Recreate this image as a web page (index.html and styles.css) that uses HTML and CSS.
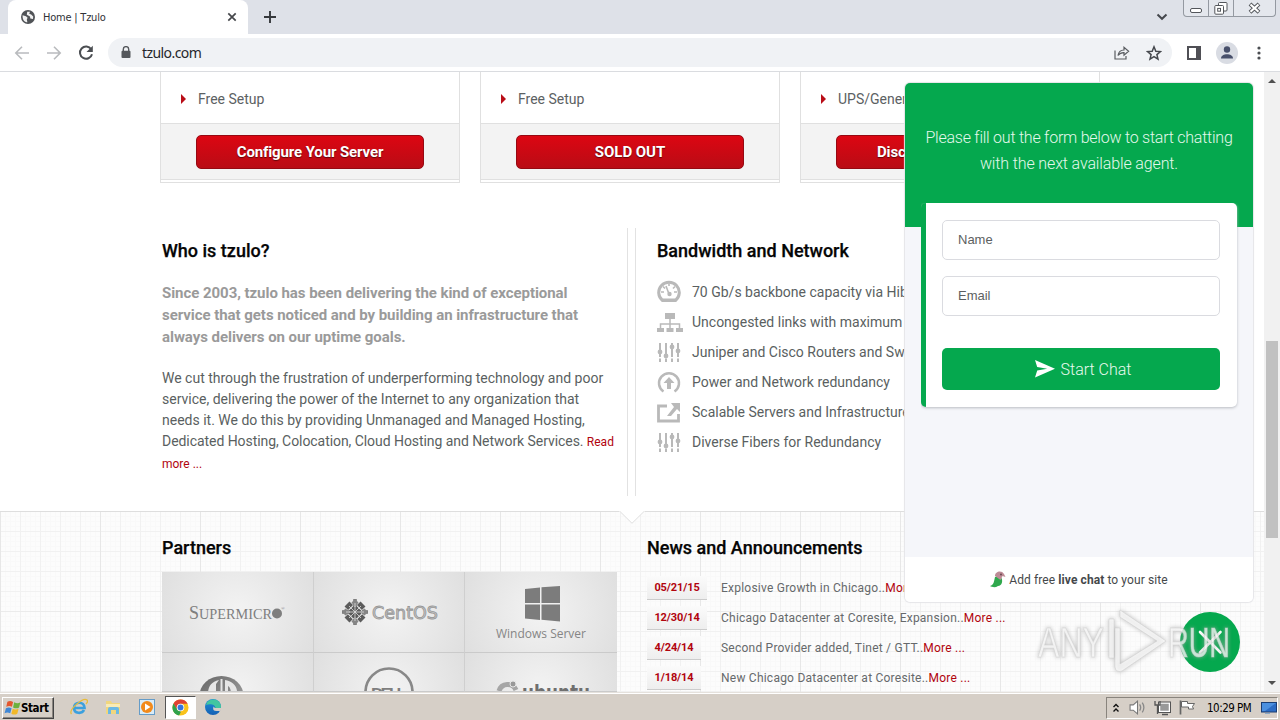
FILE: index.html
```html
<!DOCTYPE html>
<html lang="en">
<head>
<meta charset="utf-8">
<title>Home | Tzulo</title>
<link rel="stylesheet" href="styles.css">
</head>
<body>
<svg width="0" height="0" class="defs">
  <defs>
    <linearGradient id="metal" x1="0" y1="0" x2="1" y2="1"><stop offset="0" stop-color="#666"/><stop offset="1" stop-color="#aaa"/></linearGradient>
    <linearGradient id="edge" x1="0" y1="0" x2="0" y2="1"><stop offset="0" stop-color="#1f8fd8"/><stop offset="1" stop-color="#1460b4"/></linearGradient>
    <symbol id="sliders" viewBox="0 0 26 24"><g stroke="#b9b9b9" stroke-width="2" fill="#b9b9b9"><path d="M3 3v19M9 3v19M15 3v19M21 3v19" stroke-dasharray="14 1.5"/><circle cx="3" cy="12" r="1.4"/><circle cx="9" cy="16" r="1.4"/><circle cx="15" cy="7" r="1.4"/><circle cx="21" cy="11" r="1.4"/></g></symbol>
  </defs>
</svg>

<header class="tabstrip">
  <div class="tabedge"></div>
  <div class="tab">
    <svg class="globe" width="14" height="14" viewBox="0 0 14 14"><circle cx="7" cy="7" r="7" fill="#505357"/><path d="M1.6 5.2 5 6.200l1.600 1.600-.8 1.700.6 2.800C3.500 12.300 1.300 9.500 1.600 5.200zM6.200 1.700 9 1.800l-.8 2 2 .6 2 2.100-.2 2.400-2.700-.3-.3-2.200-3.200-1.600z" fill="#fff" opacity=".92"/></svg>
    <span class="tab-title">Home | Tzulo</span>
    <svg width="10" height="10" viewBox="0 0 10 10"><path d="m1.300 1.300 7.400 7.400m0-7.400-7.400 7.400" stroke="#45474b" stroke-width="1.700"/></svg>
  </div>
  <svg class="plus" width="12" height="12" viewBox="0 0 12 12"><path d="M6 0v12M0 6h12" stroke="#35383c" stroke-width="1.900"/></svg>
  <svg class="chev" width="12" height="8" viewBox="0 0 12 8"><path d="m1.500 1.500 4.500 4.300 4.500-4.300" fill="none" stroke="#45484d" stroke-width="2"/></svg>
  <div class="winctl">
    <span class="w1"><svg width="13" height="6"><rect x=".5" y=".5" width="11" height="4" rx="1.500" fill="#fff" stroke="#53565b"/></svg></span>
    <span class="w2"><svg width="14" height="13" viewBox="0 0 14 13"><g fill="#fff" stroke="#53565b"><rect x="4.500" y=".5" width="8.500" height="8.500" rx="1"/><rect x=".8" y="3.500" width="8.700" height="8.700" rx="1"/><rect x="3.700" y="6.400" width="2.800" height="2.800"/></g></svg></span>
    <span class="w3"><svg width="13" height="12" viewBox="0 0 13 12"><path d="m2 2 9 8.300M11 2l-9 8.300" stroke="#53565b" stroke-width="4"/><path d="m2.500 2.500 8 7.300M10.500 2.500l-8 7.300" stroke="#fff" stroke-width="2.200"/></svg></span>
  </div>
</header>

<div class="toolbar">
  <svg width="16" height="16" viewBox="0 0 16 16"><path d="M15 8H2M8 1.800 1.800 8 8 14.200" fill="none" stroke="#b9bbbe" stroke-width="1.600"/></svg>
  <svg width="16" height="16" viewBox="0 0 16 16"><path d="M1 8h13M8 1.800 14.200 8 8 14.200" fill="none" stroke="#b9bbbe" stroke-width="1.600"/></svg>
  <svg width="16" height="16" viewBox="0 0 16 16"><path d="M13.200 4.300A6.100 6.100 0 1 0 14 9.200" fill="none" stroke="#4b4e52" stroke-width="2"/><path d="M14.800.8v6.300H8.500z" fill="#4b4e52"/></svg>
  <div class="omnibox">
    <svg width="10" height="13" viewBox="0 0 10 13"><path d="M2.300 6V3.300a2.700 2.700 0 0 1 5.400 0V6" fill="none" stroke="#55585c" stroke-width="1.400"/><rect x=".5" y="4.800" width="9" height="7.200" rx="1" fill="#55585c"/></svg>
    <span class="url">tzulo.com</span>
    <svg class="share" width="16" height="14" viewBox="0 0 16 14"><path d="M1 4.500V13h11v-3" fill="none" stroke="#5a5d61" stroke-width="1.200"/><path d="M4 9.500c.6-3.700 2.700-5.400 6-5.500V1.300l4.600 4-4.600 4V6.600C7.300 6.500 5.600 7.300 4 9.500z" fill="none" stroke="#5a5d61" stroke-width="1.200"/></svg>
    <svg width="16" height="16" viewBox="0 0 16 16"><path d="m8 1.800 1.800 4.400 4.700.4-3.600 3 1.100 4.600L8 11.700l-4 2.500 1.100-4.600-3.600-3 4.700-.4z" fill="none" stroke="#45484d" stroke-width="1.500"/></svg>
  </div>
  <svg class="panel" width="14" height="14" viewBox="0 0 14 14"><rect x="1" y="1" width="12" height="12" fill="#fff" stroke="#4f4f55" stroke-width="2"/><path d="M9 1h4v12H9z" fill="#4f4f55"/></svg>
  <svg class="avatar" width="22" height="22" viewBox="0 0 22 22"><circle cx="11" cy="11" r="11" fill="#d9dce3"/><circle cx="11" cy="7.500" r="3.200" fill="#48506b"/><path d="M5 16.500c0-5.600 12-5.600 12 0z" fill="#48506b"/></svg>
  <svg class="dots" width="4" height="14"><g fill="#4b4e52"><circle cx="2" cy="2" r="1.600"/><circle cx="2" cy="7" r="1.600"/><circle cx="2" cy="12" r="1.600"/></g></svg>
</div>

<div class="view">
  <main class="page">
    <section class="plans">
      <article class="plan"><div class="feature"><i></i><span>Free Setup</span></div><div class="buy"><a class="btn">Configure Your Server</a></div></article>
      <article class="plan"><div class="feature"><i></i><span>Free Setup</span></div><div class="buy"><a class="btn wide">SOLD OUT</a></div></article>
      <article class="plan"><div class="feature"><i></i><span>UPS/Generator</span></div><div class="buy"><a class="btn">Discover Our Services</a></div></article>
    </section>

    <section class="about">
      <div class="who">
        <h2>Who is tzulo?</h2>
        <p class="lead">Since 2003, tzulo has been delivering the kind of exceptional<br>service that gets noticed and by building an infrastructure that<br>always delivers on our uptime goals.</p>
        <p class="copy">We cut through the frustration of underperforming technology and poor<br>service, delivering the power of the Internet to any organization that<br>needs it. We do this by providing Unmanaged and Managed Hosting,<br><span>Dedicated Hosting, Colocation, Cloud Hosting and Network Services. </span><a>Read<br>more ...</a></p>
      </div>
      <div class="divider"></div>
      <div class="network">
        <h2>Bandwidth and Network</h2>
        <ul>
          <li><svg width="26" height="24" viewBox="0 0 26 24"><path d="M5.500 20.500a10.300 10.300 0 1 1 13 0z" fill="#fff" stroke="#b9b9b9" stroke-width="3"/><path d="m12 14-3-8M12 3.500V6M4 12h3M17 12h3M6 6.500l2 2M18 6.500l-2 2" stroke="#b9b9b9" stroke-width="1.600"/><circle cx="12.500" cy="14" r="2.200" fill="#b9b9b9"/><path d="M6 18.500h12V22H6z" fill="#b9b9b9"/></svg><span>70 Gb/s backbone capacity via Hibernia</span></li>
          <li><svg width="26" height="24" viewBox="0 0 26 24"><path d="M8 3h10v6H8zM0 18h7v4H0zM9.500 18h7v4h-7zM19 18h7v4h-7z" fill="#b9b9b9"/><path d="M13 8v10M3.500 18v-4h19v4" fill="none" stroke="#b9b9b9" stroke-width="1.500"/></svg><span>Uncongested links with maximum uptime</span></li>
          <li><svg width="26" height="24"><use href="#sliders"/></svg><span>Juniper and Cisco Routers and Switches</span></li>
          <li><svg width="26" height="24" viewBox="0 0 26 24"><path d="M6.500 21.500a10 10 0 1 1 11 0" fill="none" stroke="#b9b9b9" stroke-width="2.500"/><path d="m12 7 5.500 6H14v6h-4v-6H6.500z" fill="#b9b9b9"/></svg><span>Power and Network redundancy</span></li>
          <li><svg width="26" height="24" viewBox="0 0 26 24"><path d="M10 6H1.500v15h20v-7" fill="none" stroke="#b9b9b9" stroke-width="2.800"/><path d="M14 3h9v9l-3-3-6 7H10l7-9z" fill="#b9b9b9"/></svg><span>Scalable Servers and Infrastructure</span></li>
          <li><svg width="26" height="24"><use href="#sliders"/></svg><span>Diverse Fibers for Redundancy</span></li>
        </ul>
      </div>
    </section>

    <section class="lower">
      <svg class="notch" width="26" height="14" viewBox="0 0 26 14"><path d="M0 0h26L13 12.500z" fill="#fff"/><path d="m1 .5 12 11.800L25 .5" fill="none" stroke="#dedede"/></svg>
      <div class="partners">
        <h2>Partners</h2>
        <div class="logos">
          <div class="logo"><svg width="151" height="80"><g fill="#7e7e7e" font-family="Liberation Serif, serif"><text x="27" y="47" font-size="18">S</text><text x="37" y="47" font-size="14.500" textLength="73" lengthAdjust="spacingAndGlyphs">UPERMICR</text><circle cx="115" cy="41.500" r="5"/><text x="119" y="38" font-size="5">®</text></g></svg></div>
          <div class="logo"><svg width="151" height="80"><g transform="translate(41 40)" fill="none" stroke-width="3.500"><path d="M0-13V13M-13 0H13" stroke="#777" stroke-dasharray="3 1"/><path d="m-8-8 16 16M8-8-8 8" stroke="#5c5c5c" stroke-width="7" stroke-dasharray="5 1"/><path d="m0-13 3.500 3.500L0-5l-3.500-4.500zM0 5l3.500 4.500L0 13l-3.500-3.500zM-13 0l3.500-3.500L-5 0l-4.500 3.500zM5 0l4.500-3.500L13 0 9.500 3.500z" fill="#858585" stroke="none"/><path d="M-9 0H9M0-9V9M-6-6 6 6M6-6-6 6" stroke="#ddd" stroke-width=".8"/></g><text x="58" y="47" font-family="DejaVu Sans, sans-serif" font-size="18" textLength="66" lengthAdjust="spacingAndGlyphs" fill="#c9c9c9" stroke="#989898" stroke-width=".9">CentOS</text></svg></div>
          <div class="logo"><svg width="152" height="80"><path d="m60 17 15-1.500V31H60zM76.500 15.300 95 14v17H76.500zM60 32.500h15V48l-15-1.500zM76.500 32.500H95v17l-18.500-1.800z" fill="#7c7c7c"/><text x="31" y="65.500" font-family="Open Sans, sans-serif" font-size="13" textLength="90" lengthAdjust="spacingAndGlyphs" fill="#858585">Windows Server</text></svg></div>
          <div class="logo"><svg width="151" height="39"><ellipse cx="59.500" cy="43" rx="22" ry="20" fill="url(#metal)"/><path d="M57 27c-9 2-11 8-11 14h8V31zM63 27c7 1 13 6 12 14h-6c0-4-1-7-3-8v8h-3zM58.500 26h2v16h-2z" fill="#e6e6e6"/></svg></div>
          <div class="logo"><svg width="151" height="39"><circle cx="75" cy="39" r="23.500" fill="none" stroke="#888" stroke-width="2.700"/><text x="57" y="47" font-family="Liberation Sans, sans-serif" font-weight="bold" font-size="17" textLength="36" fill="#7f7f7f">DELL</text></svg></div>
          <div class="logo"><svg width="152" height="39"><path d="M34 38a9 9 0 0 1 17-1" fill="none" stroke="#a6a6a6" stroke-width="5"/><circle cx="48" cy="31" r="3" fill="#999" stroke="#e7e7e7"/><text x="57" y="47" font-family="DejaVu Sans, sans-serif" font-weight="bold" font-size="21" textLength="68" lengthAdjust="spacingAndGlyphs" fill="#6f6f6f">ubuntu</text></svg></div>
        </div>
      </div>
      <div class="news">
        <h2>News and Announcements</h2>
        <div class="item"><b>05/21/15</b><span>Explosive Growth in Chicago..<a>More ...</a></span></div>
        <div class="item"><b>12/30/14</b><span>Chicago Datacenter at Coresite, Expansion..<a>More ...</a></span></div>
        <div class="item"><b class="short">4/24/14</b><span>Second Provider added, Tinet / GTT..<a>More ...</a></span></div>
        <div class="item"><b class="short">1/18/14</b><span>New Chicago Datacenter at Coresite..<a>More ...</a></span></div>
      </div>
    </section>

    <aside class="chat">
      <div class="chat-head">Please fill out the form below to start chatting<br><span>with the next available agent.</span></div>
      <div class="chat-body">
        <form class="chat-form">
          <div class="field">Name</div>
          <div class="field">Email</div>
          <div class="start"><svg width="20" height="18" viewBox="0 0 20 18"><path d="M0 0 20 8.700 0 17.500l2.200-7 10-1.800-10-1.700z" fill="#fff"/></svg><span>Start Chat</span></div>
        </form>
      </div>
      <div class="chat-foot"><svg width="16" height="17" viewBox="0 0 16 17"><path d="M0 15c4-1 4-5 5-9l5-1c4 4 2 10-2 10-3 2-6 1-8 0z" fill="#2fa84d"/><path d="M5 5c0-5 7-6 9-2l1.500 3-3-1-2 4z" fill="#bd8b96"/><circle cx="11" cy="3.500" r="1" fill="#6d4550"/></svg><span>Add free <b>live chat</b> to your site</span></div>
    </aside>
    <svg class="closer" width="60" height="60" viewBox="0 0 60 60"><circle cx="30" cy="30" r="30" fill="#05a84e"/><path d="m20 20 20.500 20.500M40.500 20 20 40.500" stroke="#fff" stroke-width="2.600" stroke-linecap="round"/></svg>
    <svg class="mark" width="204" height="72" viewBox="0 0 204 72"><g fill="#fff" fill-opacity=".7" stroke="#ccc" stroke-opacity=".5" stroke-width="1"><text x="4" y="51" font-family="Liberation Sans, sans-serif" font-size="42" textLength="66" lengthAdjust="spacingAndGlyphs">ANY</text><text x="134" y="51" font-family="Liberation Sans, sans-serif" font-size="42" textLength="62" lengthAdjust="spacingAndGlyphs">RUN</text><path fill-rule="evenodd" d="M86 4 132 35 88 65q-6 2-7-4V22h5v36l37-23-37-24zM75 13h5v39h-5z"/></g></svg>
  </main>
  <div class="scroll"><i class="up"></i><div class="thumb"></div><i class="down"></i></div>
</div>

<footer class="taskbar">
  <div class="startbtn"><svg width="17" height="16" viewBox="0 0 15 14"><path d="M3 1.500q2.500-1.500 5 .2L7 6q-2.300-1.400-5 0z" fill="#e4572e"/><path d="M9 2q3 1.500 5.500 0l-1.200 4.500Q11 8 8 6.500z" fill="#6cb13c"/><path d="M1.700 7.200q2.500-1.200 5 0l-1.200 4.400Q3 10.200.5 11.600z" fill="#3f87d6"/><path d="M7.700 7.700q2.500 1.400 5.200 0L11.700 12q-2.500 1.500-5.200 0z" fill="#f2b828"/></svg><span>Start</span></div>
  <div class="quick">
    <svg width="18" height="18" viewBox="0 0 18 18"><path d="M3.500 10h11c0-7-10.500-7-10.500 0 0 6 8 6 10 2" fill="none" stroke="#3ba0de" stroke-width="2.700"/><path d="M1.500 16C-2 12 13-1 17 2c1 1 0 3-1 4" fill="none" stroke="#e8bc3a" stroke-width="1.300"/></svg>
    <svg width="18" height="18" viewBox="0 0 18 18"><path d="M2 3h5l1 2h8v11H2z" fill="#f0d67e"/><path d="M2 6h14v3H2z" fill="#f9ebb5"/><path d="M4 16v-5q0-2 2-2h7q2 0 2 2v5h-3v-4H7v4z" fill="#6bb9e4"/></svg>
    <svg width="18" height="18" viewBox="0 0 18 18"><rect x="1.500" y="1.500" width="15" height="15" fill="#d9ecf8" stroke="#659cc8"/><circle cx="9" cy="9" r="6" fill="#f28a1b"/><path d="m7 5.500 5.500 3.500L7 12.500z" fill="#fff"/></svg>
    <div class="active"><svg width="17" height="17" viewBox="0 0 18 18"><circle cx="9" cy="9" r="8.500" fill="#f9c21b"/><path d="M1.600 4.800A8.500 8.500 0 0 1 16.600 5H9L5 11z" fill="#de4134"/><path d="M1.600 4.800 6 12l3.500 1.500-2 4A8.500 8.500 0 0 1 1.600 4.800z" fill="#2fa24d"/><circle cx="9" cy="9" r="4" fill="#fff"/><circle cx="9" cy="9" r="3.100" fill="#3575dc"/></svg></div>
    <svg width="18" height="18" viewBox="0 0 18 18"><circle cx="9" cy="9" r="8" fill="url(#edge)"/><path d="M3 4.500c4-5.500 14-3.500 14 4.500 0 3-3 4-6 3 2-5-4-7-9-5z" fill="#42c6a0"/><path d="M9.500 8.500q-1.500 4.500 3 4.500h4l1-3h-6.500z" fill="#d6cec6"/></svg>
  </div>
  <div class="tray">
    <svg width="8" height="10" viewBox="0 0 8 10"><path d="m1.500 4 2.500-2.500L6.500 4M1.500 8.500 4 6l2.500 2.500" fill="none" stroke="#111" stroke-width="1.400"/></svg>
    <svg class="vol" width="17" height="15" viewBox="0 0 16 14"><path d="M1 4.500h3L8 1v12L4 9.500H1z" fill="#fff" stroke="#777"/><path d="M10 4q2 3 0 6M12.500 2.500q3 4.500 0 9" fill="none" stroke="#888" stroke-width="1.200"/></svg>
    <svg width="17" height="16" viewBox="0 0 17 16"><rect x="5.500" y="3" width="10" height="8.500" fill="#999" stroke="#fff" stroke-width="1.500"/><rect x="4.500" y="2" width="12" height="10.500" fill="none" stroke="#555"/><path d="M8 14.500h6" stroke="#555" stroke-width="1.500"/><path d="M1 1v4h5V1M3.500 5v9" fill="none" stroke="#555" stroke-width="1.300"/></svg>
    <svg width="17" height="15" viewBox="0 0 17 15"><path d="M1.500.5v14" stroke="#666" stroke-width="1.700"/><path d="M2.500 1.500h6v2h7l-2 3 1 2.500h-5v-2h-7z" fill="#fff" stroke="#666"/></svg>
    <span class="clock">10:29 PM</span>
    <svg width="16" height="14" viewBox="0 0 16 14"><rect x=".5" y="1.500" width="15" height="9.500" fill="#2c6cc4" stroke="#1a3e73"/><path d="m1 2 14 0-11 8H1z" fill="#4b90df"/><path d="M4 12.500h5" stroke="#8aa8c7"/></svg>
  </div>
</footer>
</body>
</html>
```
FILE: styles.css
```css
* { box-sizing: border-box; }
body { margin: 0; width: 1280px; height: 720px; overflow: hidden; display: flex; flex-direction: column; font-family: Roboto, sans-serif; background: #fff; }
svg { display: block; flex: none; }
h2 { margin: 0; color: #050505; font-size: 18px; line-height: 22px; font-weight: 500; white-space: nowrap; -webkit-text-stroke: .25px #050505; }
a { color: #b1040e; }

.tabstrip { height: 34px; flex: none; display: flex; background: #dee1e8; }
.tabedge { width: 8px; border-bottom-right-radius: 6px; }
.tab { width: 240px; background: #fff; border-radius: 8px 8px 0 0; display: flex; align-items: center; padding: 0 11px 0 13px; }
.tab-title { flex: 1; margin-left: 8px; font: 11px "DejaVu Sans Condensed", "DejaVu Sans", sans-serif; letter-spacing: -.22px; color: #303236; }
.plus { margin: 11px 0 0 16px; }
.chev { margin: 13px 15px 0 auto; }
.winctl { display: flex; width: 93px; height: 17px; margin-right: 4px; border: 1px solid #9499a1; border-top: 0; border-radius: 0 0 4px 4px; background: #e4e7ed; }
.winctl span { display: flex; justify-content: center; align-items: center; border-right: 1px solid #9499a1; }
.w1 { width: 25px; padding-top: 5px; }
.w2 { width: 25px; }
.winctl .w3 { width: 41px; border-right: 0; }

.toolbar { height: 38px; flex: none; display: flex; align-items: center; padding: 0 20px 0 14px; gap: 16px; border-bottom: 1px solid #dadce0; }
.omnibox { display: flex; align-items: center; flex: 1; height: 29px; margin-left: -2px; margin-right: -1px; border-radius: 15px; background: #f0f2f5; padding: 0 10px 0 13px; }
.url { flex: 1; margin-left: 11px; font: 14px "Noto Sans", sans-serif; letter-spacing: -.58px; color: #25272b; }
.share { margin-right: 16px; }
.avatar { margin-left: -1px; }
.dots { margin: 0 -1px 0 3px; }

.view { flex: 1; min-height: 0; display: flex; }
.page { position: relative; width: 1264px; overflow: hidden; }
.plans { display: flex; gap: 20px; padding-left: 160px; height: 156px; }
.plan { width: 300px; height: 111px; border: 1px solid #e0e0e0; border-top: 0; }
.feature { height: 52px; border-bottom: 1px solid #e0e0e0; display: flex; align-items: center; padding: 3px 0 0 20px; font-size: 14px; color: #5c6163; white-space: nowrap; }
.feature i { border: 5px solid transparent; border-left: 5px solid #b90d17; border-right: 0; margin-right: 12px; }
.buy { height: 56px; background: #f3f3f3; border-bottom: 1px solid #e0e0e0; padding: 11px 35px 0; }
.btn { display: block; height: 34px; border: 1px solid #960912; border-radius: 5px; background: linear-gradient(#dc0612, #b90c15); color: #fff; text-align: center; font-size: 15px; line-height: 32px; font-weight: 700; text-shadow: 0 1px 1px #60050a; letter-spacing: -.12px; white-space: nowrap; }
.wide { letter-spacing: -.05px; }

.about { display: flex; height: 283px; }
.who { width: 465px; margin-left: 162px; padding-top: 12px; white-space: nowrap; }
.lead { margin: 20px 0 20px; font-size: 15px; line-height: 22px; font-weight: 700; color: #9a9a9a; letter-spacing: -.05px; }
.copy { margin: 0; font-size: 14px; line-height: 21px; color: #5a5f61; }
.copy span { letter-spacing: -.06px; }
.copy a { font-size: 12px; line-height: 22px; }
.divider { width: 9px; height: 268px; border: 1px solid #e2e2e2; border-width: 0 1px; }
.network { margin-left: 21px; padding-top: 12px; }
.network ul { list-style: none; margin: 15px 0 0; padding: 0; }
.network li { height: 30px; display: flex; align-items: center; gap: 9px; font-size: 14px; color: #5a5f61; white-space: nowrap; }

.lower { position: relative; height: 181px; display: flex; border-top: 1px solid #dedede; background-color: #fcfcfc; background-image: linear-gradient(90deg, #e7e7e7 1px, transparent 1px), linear-gradient(#ebebeb 1px, transparent 1px), linear-gradient(90deg, #f1f1f1 1px, transparent 1px), linear-gradient(#f1f1f1 1px, transparent 1px), linear-gradient(90deg, #f9f9f9 1px, transparent 1px), linear-gradient(#f9f9f9 1px, transparent 1px); background-size: 100px 100px, 100px 100px, 20px 20px, 20px 20px, 5px 5px, 5px 5px; background-position: 0 -1px; }
.notch { position: absolute; left: 619px; top: -1px; }
.partners { width: 455px; margin-left: 162px; padding-top: 25px; }
.logos { display: grid; grid-template-columns: 152px 151px 152px; grid-template-rows: 81px 39px; margin-top: 13px; overflow: hidden; }
.logo { overflow: hidden; background: radial-gradient(circle at 50% 50%, #f3f3f3, #dfdfdf); border-right: 1px solid #cfcfcf; border-bottom: 1px solid #cacaca; }
.logo:nth-child(3n) { border-right: 0; }
.logo:nth-child(n+4) { background: radial-gradient(circle at 50% 100%, #f3f3f3, #dfdfdf); }
.news { margin-left: 30px; padding-top: 25px; white-space: nowrap; }
.news h2 { margin-bottom: 14px; }
.item { height: 30px; display: flex; align-items: center; font-size: 12px; color: #66696b; letter-spacing: .23px; }
.item b { width: 60px; height: 24px; margin-right: 14px; text-align: center; font-size: 11px; line-height: 23px; color: #b1040e; background: linear-gradient(#fbfbfb, #eee); border-bottom: 1px solid #ccc; letter-spacing: -.1px; }
.item .short { width: 54px; margin-right: 20px; }

.chat { position: absolute; left: 905px; top: 11px; width: 348px; height: 519px; border-radius: 5px; background: #f5f6fa; box-shadow: 0 0 1px 1px #e5e5e8; display: flex; flex-direction: column; overflow: hidden; }
.chat-head { height: 144px; flex: none; background: #05a84e; color: #e4f8ec; text-align: center; font-size: 16px; line-height: 26px; padding-top: 42px; font-weight: 300; letter-spacing: -.24px; }
.chat-head span { letter-spacing: -.13px; }
.chat-body { height: 330px; padding: 0 16px; }
.chat-form { position: relative; top: -24px; height: 204px; background: #fff; border-left: 5px solid #05a84e; border-radius: 5px; box-shadow: 0 1px 3px #b9bcc2; padding: 17px 17px 0 16px; clip-path: inset(0 -4px -4px 0); }
.field { height: 40px; border: 1px solid #dadbe0; border-radius: 5px; margin-bottom: 16px; padding-left: 15px; font: 13px/38px "Liberation Sans", sans-serif; color: #5c5f61; }
.start { height: 42px; margin-top: 32px; padding-left: 4px; border-radius: 5px; background: #05a84e; display: flex; justify-content: center; align-items: center; gap: 6px; color: #e9faef; font-size: 16px; font-weight: 300; }
.chat-foot { flex: 1; background: #fff; display: flex; justify-content: center; align-items: center; gap: 3px; font-size: 12px; color: #45484a; letter-spacing: .09px; }
.closer { position: absolute; left: 1180px; top: 540px; }
.mark { position: absolute; left: 1034px; top: 534px; filter: drop-shadow(0 0 2px #aaa); }

.scroll { width: 16px; background: #f1f1f1; display: flex; flex-direction: column; align-items: center; }
.up { border: 4px solid transparent; border-top: 0; border-bottom-color: #505050; margin-top: 7px; }
.down { border: 4px solid transparent; border-bottom: 0; border-top-color: #505050; margin: auto 0 7px; }
.thumb { width: 12px; height: 197px; margin-top: 258px; background: #c1c1c1; }
.defs { position: absolute; }

.taskbar { height: 28px; flex: none; display: flex; align-items: center; background: #d6cfc7; border-top: 1px solid #e5e1dc; box-shadow: inset 0 1px #fff; }
.startbtn { width: 52px; height: 22px; margin: 2px 0 0 2px; display: flex; align-items: center; gap: 0; padding-left: 1px; border: 1px solid; border-color: #fff #444 #444 #fff; box-shadow: inset -1px -1px #8b8680; font: bold 11.500px "DejaVu Sans Condensed", sans-serif; letter-spacing: -.4px; color: #000; }
.quick { display: flex; align-items: center; margin-left: 16px; gap: 16px; padding-top: 1px; }
.active { width: 31px; height: 23px; margin: 0 -7px 0 -7px; border: 1px solid; border-color: #555 #fff #fff #555; background: #fff; display: flex; align-items: center; justify-content: center; }
.quick > svg:last-child { margin-left: -1px; }
.tray { width: 172px; height: 22px; margin: 2px 2px 0 auto; display: flex; align-items: center; border: 1px solid; border-color: #89847d #fff #fff #89847d; padding-left: 5px; gap: 8px; }
.vol { margin-left: 1px; }
.clock { font: 11.500px "DejaVu Sans Condensed", sans-serif; letter-spacing: -.5px; color: #000; margin-left: 3px; flex: 1; white-space: nowrap; }
```
